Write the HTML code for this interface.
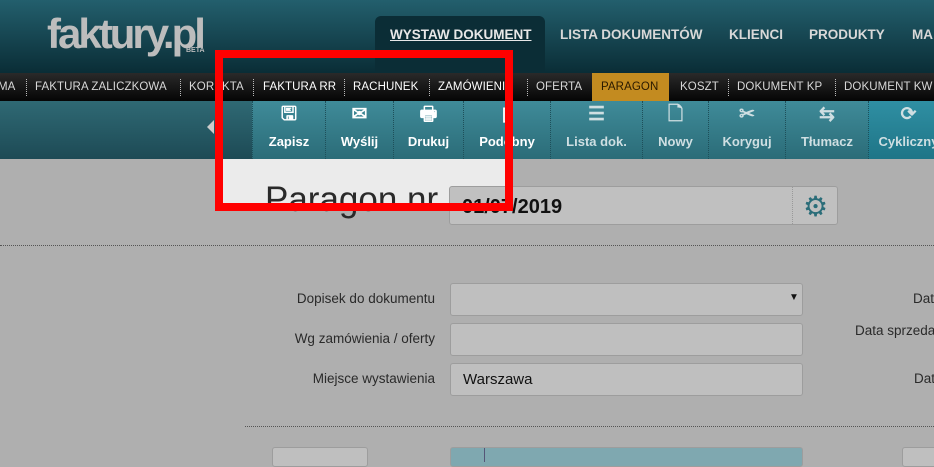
<!DOCTYPE html>
<html><head><meta charset="utf-8"><style>
*{margin:0;padding:0;box-sizing:border-box}
body{width:934px;height:462px;overflow:hidden;background:#afafaf;font-family:"Liberation Sans",sans-serif;position:relative}
.a{position:absolute;white-space:nowrap}
#hdr{position:absolute;left:0;top:0;width:934px;height:73px;background:linear-gradient(#235f6d,#0a2d36)}
#nav{position:absolute;left:0;top:73px;width:934px;height:28px;background:linear-gradient(#2a2a2a,#050505)}
#nav .a{top:8px;font-size:11.5px;color:#d8d8d8;letter-spacing:.1px}
.sep{position:absolute;top:6px;height:17px;border-left:1px dotted #bbb}
#tb{position:absolute;left:0;top:101px;width:934px;height:58px;background:linear-gradient(#2f6974,#1d4a55)}
.btn{position:absolute;top:101px;height:58px;background:linear-gradient(#3f8b99,#2b6c78);border-left:1px dotted #1e4f59;text-align:center;color:#cfdfe2;font-weight:bold;font-size:13px}
.btn .t{position:absolute;left:0;right:0;top:33px}
.btn .i{position:absolute;left:0;right:0;top:3px;font-size:19px;line-height:22px}
.w{color:#fff}
.dot{position:absolute;border-top:1px dotted #555;height:0}
.lbl{position:absolute;font-size:13.5px;color:#2a2a2a;text-align:right;white-space:nowrap}
.inp{position:absolute;background:#bfbfbf;border:1px solid #9d9d9d;border-radius:3px}
</style></head><body>
<div id="hdr"></div>
<div class="a" style="left:47px;top:10px;font-size:42px;font-weight:bold;color:#bdbdbd;letter-spacing:-3px">faktury.pl</div>
<div class="a" style="left:186px;top:47px;font-size:7px;font-weight:bold;color:#bdbdbd">BETA</div>
<div class="a" style="left:375px;top:16px;width:170px;height:57px;background:#0b2d36;border-radius:6px 6px 0 0"></div>
<div class="a" style="left:390px;top:27px;font-size:13.5px;font-weight:bold;color:#e8e8e8;text-decoration:underline">WYSTAW DOKUMENT</div>
<div class="a" style="left:560px;top:27px;font-size:13.5px;font-weight:bold;color:#d8d8d8">LISTA DOKUMENTÓW</div>
<div class="a" style="left:729px;top:27px;font-size:13.5px;font-weight:bold;color:#d8d8d8">KLIENCI</div>
<div class="a" style="left:809px;top:27px;font-size:13.5px;font-weight:bold;color:#d8d8d8">PRODUKTY</div>
<div class="a" style="left:912px;top:27px;font-size:13.5px;font-weight:bold;color:#d8d8d8">MA</div>
<div id="nav">
<div class="a" style="left:-2px">MA</div><div class="sep" style="left:26px"></div>
<div class="a" style="left:35px">FAKTURA ZALICZKOWA</div><div class="sep" style="left:180px"></div>
<div class="a" style="left:189px">KOREKTA</div><div class="sep" style="left:253px"></div>
<div class="a" style="left:263px;color:#fff">FAKTURA RR</div><div class="sep" style="left:344px"></div>
<div class="a" style="left:353px;color:#fff">RACHUNEK</div><div class="sep" style="left:429px"></div>
<div class="a" style="left:438px;color:#fff">ZAMÓWIENIE</div><div class="sep" style="left:527px"></div>
<div class="a" style="left:536px">OFERTA</div>
<div class="a" style="left:592px;top:0;width:77px;height:28px;background:#c38b20"></div>
<div class="a" style="left:601px;color:#2a1a00">PARAGON</div>
<div class="a" style="left:680px">KOSZT</div><div class="sep" style="left:728px"></div>
<div class="a" style="left:737px">DOKUMENT KP</div><div class="sep" style="left:835px"></div>
<div class="a" style="left:844px">DOKUMENT KW</div>
</div>
<div id="tb"></div>
<div class="a" style="left:207px;top:120px;width:0;height:0;border:7px solid transparent;border-right-color:#ccc;border-left:0"></div>
<div class="btn w" style="left:252px;width:73px"><div class="i">🖫</div><div class="t">Zapisz</div></div>
<div class="btn w" style="left:325px;width:68px"><div class="i">✉</div><div class="t">Wyślij</div></div>
<div class="btn w" style="left:393px;width:70px"><div class="i">🖶</div><div class="t">Drukuj</div></div>
<div class="btn w" style="left:463px;width:87px"><div class="i">▯</div><div class="t">Podobny</div></div>
<div class="btn" style="left:550px;width:92px"><div class="i">☰</div><div class="t">Lista dok.</div></div>
<div class="btn" style="left:642px;width:66px"><div class="i">🗋</div><div class="t">Nowy</div></div>
<div class="btn" style="left:708px;width:77px"><div class="i">✂</div><div class="t">Koryguj</div></div>
<div class="btn" style="left:785px;width:83px"><div class="i">⇆</div><div class="t">Tłumacz</div></div>
<div class="btn" style="left:868px;width:80px;background:linear-gradient(#2f8fa3,#1f7587)"><div class="i">⟳</div><div class="t">Cykliczny</div></div>

<div class="a" style="left:223px;top:159px;width:282px;height:44px;background:#ebebeb"></div>
<div class="a" style="left:265px;top:180px;font-size:35px;color:#2a2a2a">Paragon nr</div>
<div class="inp" style="left:449px;top:186px;width:389px;height:39px;background:#c0c0c0"></div>
<div class="a" style="left:462px;top:196px;font-size:20px;font-weight:bold;color:#111">01/07/2019</div>
<div class="a" style="left:792px;top:187px;height:37px;border-left:1px dotted #999"></div>
<div class="a" style="left:803px;top:190px;font-size:28px;color:#2b6d79">⚙</div>
<div class="a" style="left:215px;top:50px;width:298px;height:161px;border:8px solid #ff0000"></div>

<div class="dot" style="left:0;top:245px;width:934px"></div>
<div class="lbl" style="right:499px;top:291px">Dopisek do dokumentu</div>
<div class="lbl" style="right:499px;top:331px">Wg zamówienia / oferty</div>
<div class="lbl" style="right:499px;top:371px">Miejsce wystawienia</div>
<div class="inp" style="left:450px;top:283px;width:353px;height:33px"></div>
<div class="a" style="left:789px;top:292px;font-size:10px;color:#111">▼</div>
<div class="inp" style="left:450px;top:323px;width:353px;height:33px"></div>
<div class="inp" style="left:450px;top:363px;width:353px;height:33px"></div>
<div class="a" style="left:463px;top:371px;font-size:15px;color:#111">Warszawa</div>
<div class="lbl" style="left:913px;top:291px">Data</div>
<div class="lbl" style="left:855px;top:323px">Data sprzedaży</div>
<div class="lbl" style="left:914px;top:371px">Data</div>
<div class="dot" style="left:245px;top:426px;width:689px"></div>
<div class="inp" style="left:272px;top:447px;width:96px;height:20px"></div>
<div class="inp" style="left:450px;top:447px;width:353px;height:20px;background:#7fa8b0"></div>
<div class="a" style="left:484px;top:448px;height:14px;border-left:1px solid #557"></div>
<div class="inp" style="left:902px;top:447px;width:40px;height:20px"></div>
</body></html>
